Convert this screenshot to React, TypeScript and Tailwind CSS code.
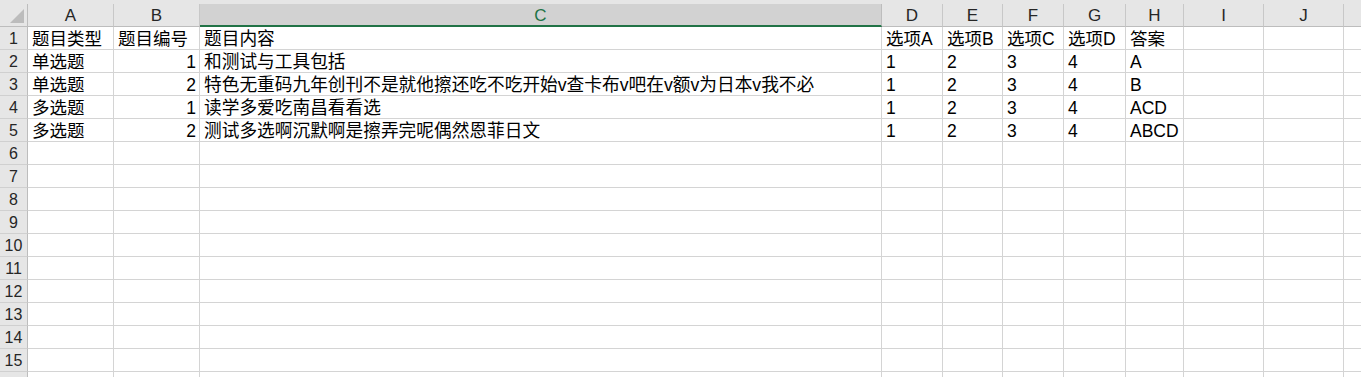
import React from "react";

const cols = [
  { key: "A", w: 86 },
  { key: "B", w: 86 },
  { key: "C", w: 682 },
  { key: "D", w: 61 },
  { key: "E", w: 60 },
  { key: "F", w: 61 },
  { key: "G", w: 62 },
  { key: "H", w: 58 },
  { key: "I", w: 80 },
  { key: "J", w: 80 },
  { key: "", w: 60 },
];

const data: string[][] = [
  ["题目类型", "题目编号", "题目内容", "选项A", "选项B", "选项C", "选项D", "答案"],
  ["单选题", "1", "和测试与工具包括", "1", "2", "3", "4", "A"],
  ["单选题", "2", "特色无重码九年创刊不是就他擦还吃不吃开始v查卡布v吧在v额v为日本v我不必", "1", "2", "3", "4", "B"],
  ["多选题", "1", "读学多爱吃南昌看看选", "1", "2", "3", "4", "ACD"],
  ["多选题", "2", "测试多选啊沉默啊是擦弄完呢偶然恩菲日文", "1", "2", "3", "4", "ABCD"],
];

const font = { fontFamily: '"Liberation Sans", "Noto Sans CJK SC", sans-serif' };

export default function App() {
  const rows = Array.from({ length: 16 }, (_, i) => i + 1);
  return (
    <div className="w-[1361px] h-[377px] overflow-hidden bg-white text-black" style={font}>
      <div className="h-[4px] bg-[#e6e6e6]" />
      <div className="flex h-[23px] bg-[#e6e6e6]">
        <div className="w-[28px] shrink-0 border-r border-[#bdbdbd] border-b border-b-[#bdbdbd] relative">
          <svg className="absolute left-0 top-0" width="27" height="22" viewBox="0 0 27 22">
            <polygon points="24,5 24,19 10,19" fill="#bcbcbc" />
          </svg>
        </div>
        {cols.map((c, i) => (
          <div
            key={i}
            style={{ width: c.w }}
            className={
              c.key === "C"
                ? "shrink-0 flex items-center justify-center border-r border-[#bdbdbd] border-b-2 border-b-[#217346] bg-[#d2d2d2] text-[#217346] text-[17px] leading-none pt-[1px]"
                : "shrink-0 flex items-center justify-center border-r border-[#c8c8c8] border-b border-b-[#bdbdbd] text-[#262626] text-[17px] leading-none"
            }
          >
            {c.key}
          </div>
        ))}
      </div>
      {rows.map((r) => {
        const d = data[r - 1] || [];
        return (
          <div key={r} className="flex h-[23px]">
            <div className="w-[28px] shrink-0 bg-[#e6e6e6] border-r border-[#bdbdbd] border-b border-b-[#d0d0d0] flex items-center justify-center text-[16px] leading-none text-[#262626] pt-[2px]">
              {r <= 15 ? r : ""}
            </div>
            {cols.map((c, i) => {
              const v = d[i] ?? "";
              const right = i === 1 && r > 1;
              return (
                <div
                  key={i}
                  style={{ width: c.w }}
                  className={
                    "shrink-0 border-r border-b border-[#d4d4d4] flex items-center whitespace-nowrap overflow-visible leading-none pt-[3px] " +
                    (i === 2 ? "text-[17.7px] " : "text-[17.5px] ") +
                    (right ? "justify-end pr-[3px]" : "pl-[4px]")
                  }
                >
                  {v}
                </div>
              );
            })}
          </div>
        );
      })}
    </div>
  );
}
